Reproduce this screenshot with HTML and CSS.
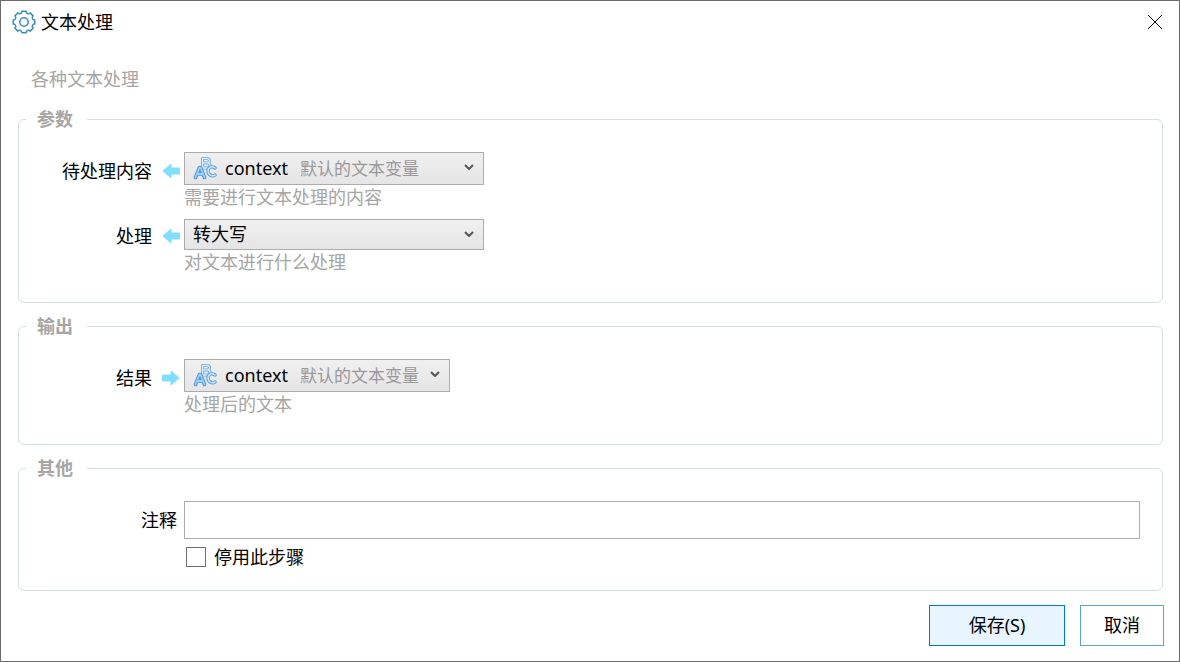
FILE: index.html
```html
<!DOCTYPE html>
<html lang="zh-CN">
<head>
    <meta charset="UTF-8">
    <meta name="viewport" content="width=device-width, initial-scale=1.0">
    <title>文本处理</title>
    <link rel="stylesheet" href="styles.css">
</head>
<body>
    <svg class="symbols" aria-hidden="true">
        <symbol id="abc" viewBox="0 0 24 24">
            <g fill="none" stroke-linejoin="round" stroke-linecap="round">
                <path d="M9.500 12V2.500h4.500a2.200 2.200 0 0 1 .5 4.400a2.500 2.500 0 0 1 0 5.100zM9.500 6.900h5" stroke="#6aaae0" stroke-width="3"/>
                <path d="M9.500 12V2.500h4.500a2.200 2.200 0 0 1 .5 4.400a2.500 2.500 0 0 1 0 5.100zM9.500 6.900h5" stroke="#e0f0fd" stroke-width="1.300"/>
                <path d="M22 12c-3.500-2.500-7-.5-7 3s3.500 6 7 4" stroke="#5b9fdc" stroke-width="3.400"/>
                <path d="M22 12c-3.500-2.500-7-.5-7 3s3.500 6 7 4" stroke="#d0e8fd" stroke-width="1.500"/>
                <path d="M2.500 21.500L6.500 11.500h1L11.500 21.500M4.500 18h5" stroke="#4a93d9" stroke-width="3.600"/>
                <path d="M2.500 21.500L6.500 11.500h1L11.500 21.500M4.500 18h5" stroke="#9fd0fb" stroke-width="1.800"/>
            </g>
        </symbol>
        <symbol id="arrow" viewBox="0 0 18 16">
            <path d="M1 8L9 1v4h8q1 0 1 1v4q0 1-1 1H9v4z" fill="#80dfff" stroke="#80dfff" stroke-linejoin="round"/>
        </symbol>
    </svg>
    <form class="dialog">
        <header class="titlebar">
            <svg class="gear" viewBox="0 0 24 24" aria-hidden="true">
                <path d="M9.900 1.200H14.100A2.300 2.300 0 0 0 18.150 2.900L21.100 5.850A2.300 2.300 0 0 0 22.800 9.900V14.100A2.300 2.300 0 0 0 21.100 18.150L18.150 21.100A2.300 2.300 0 0 0 14.100 22.800H9.900A2.300 2.300 0 0 0 5.850 21.100L2.900 18.150A2.300 2.300 0 0 0 1.200 14.100V9.900A2.300 2.300 0 0 0 2.900 5.850L5.850 2.900A2.300 2.300 0 0 0 9.900 1.200z"/>
                <circle cx="12" cy="12" r="4.200"/>
            </svg>
            <h1>文本处理</h1>
            <button type="button" class="close" aria-label="关闭">
                <svg viewBox="0 0 16 16"><path d="M1 1L15 15M15 1L1 15"/></svg>
            </button>
        </header>
        <p class="description">各种文本处理</p>

        <fieldset>
            <legend>参数</legend>
            <div class="row">
                <label for="content">待处理内容 <svg class="arrow"><use href="#arrow"/></svg></label>
                <div class="picker">
                    <select id="content" class="variable">
                        <option>context</option>
                    </select>
                    <svg class="abc"><use href="#abc"/></svg>
                    <span class="note">默认的文本变量</span>
                    <svg class="chevron" viewBox="0 0 10 6"><path d="M1 1L5 5L9 1"/></svg>
                </div>
                <p class="hint">需要进行文本处理的内容</p>
            </div>
            <div class="row">
                <label for="method">处理 <svg class="arrow"><use href="#arrow"/></svg></label>
                <div class="picker">
                    <select id="method">
                        <option>转大写</option>
                    </select>
                    <svg class="chevron" viewBox="0 0 10 6"><path d="M1 1L5 5L9 1"/></svg>
                </div>
                <p class="hint">对文本进行什么处理</p>
            </div>
        </fieldset>

        <fieldset>
            <legend>输出</legend>
            <div class="row">
                <label for="result">结果 <svg class="arrow out"><use href="#arrow"/></svg></label>
                <div class="picker narrow">
                    <select id="result" class="variable">
                        <option>context</option>
                    </select>
                    <svg class="abc"><use href="#abc"/></svg>
                    <span class="note">默认的文本变量</span>
                    <svg class="chevron" viewBox="0 0 10 6"><path d="M1 1L5 5L9 1"/></svg>
                </div>
                <p class="hint">处理后的文本</p>
            </div>
        </fieldset>

        <fieldset class="other">
            <legend>其他</legend>
            <div class="row">
                <label for="comment" class="plain">注释</label>
                <input type="text" id="comment">
                <div class="check">
                    <input type="checkbox" id="disabled">
                    <label for="disabled">停用此步骤</label>
                </div>
            </div>
        </fieldset>

        <footer>
            <button type="submit" class="save">保存(S)</button>
            <button type="button" class="cancel">取消</button>
        </footer>
    </form>
</body>
</html>
```
FILE: styles.css
```css
* {
    box-sizing: border-box;
}
body {
    margin: 0;
    background: #fff;
    color: #000;
    font-family: "Noto Sans", "Noto Sans CJK SC", sans-serif;
    font-size: 18px;
    line-height: 24px;
}
button, input, select {
    font: inherit;
    color: inherit;
}
p, h1 {
    margin: 0;
}
.symbols {
    display: none;
}
.dialog {
    min-height: 100vh;
    border: 1px solid #6b6b6b;
}

/* title bar */
.titlebar {
    display: flex;
    align-items: center;
    gap: 5px;
    height: 42px;
    padding: 0 16px 0 11px;
}
.titlebar h1 {
    flex: 1;
    font-size: 18px;
    font-weight: 400;
}
.gear {
    width: 24px;
    height: 24px;
    fill: none;
    stroke: #3b8fb8;
    stroke-width: 1.500;
    stroke-linejoin: round;
}
.close {
    display: flex;
    padding: 0;
    border: 0;
    background: none;
}
.close svg {
    width: 16px;
    height: 16px;
    stroke: #000;
}
.description {
    padding: 24px 30px 16px;
    color: #a6a6a6;
}

/* groups */
fieldset {
    min-width: 0;
    margin: 0 16px 11px 17px;
    padding: 21px 22px 28px 0;
    border: 1px solid #d5dfe5;
    border-radius: 6px;
}
legend {
    margin-left: 7px;
    padding: 0 14px 0 11px;
    color: #a6a6a6;
    font-weight: 700;
}
.other {
    padding-bottom: 21px;
}
.row {
    display: grid;
    grid-template-columns: 162px 1fr;
    column-gap: 3px;
}
.row + .row {
    margin-top: 10px;
}
.row > label {
    display: flex;
    align-items: center;
    align-self: end;
    justify-content: flex-end;
    gap: 10px;
    padding-right: 1px;
    line-height: 28px;
}
.row > .plain {
    align-self: center;
    padding-right: 4px;
}
.arrow {
    width: 18px;
    height: 16px;
}
.out {
    transform: scaleX(-1);
}
.hint {
    grid-column: 2;
    color: #a6a6a6;
}

/* drop-downs: icon, note and chevron lie over the select */
.picker {
    position: relative;
    width: 300px;
}
.narrow {
    width: 266px;
}
.picker select {
    display: block;
    width: 100%;
    height: 31px;
    padding: 0 8px 1px;
    border: 1px solid #acacac;
    border-radius: 0;
    background: linear-gradient(#f0f0f0, #e5e5e5);
    appearance: none;
}
.picker .variable {
    height: 33px;
    padding-left: 40px;
}
.picker svg, .note {
    position: absolute;
    pointer-events: none;
}
.abc {
    left: 9px;
    top: 4px;
    width: 24px;
    height: 24px;
}
.note {
    left: 116px;
    top: 5px;
    color: #999;
    font-size: 17px;
}
.chevron {
    right: 10px;
    top: 12px;
    width: 10px;
    height: 6px;
    fill: none;
    stroke: #555;
    stroke-width: 2;
}

#comment {
    width: 100%;
    height: 38px;
    padding: 0 8px;
    border: 1px solid #abadb3;
}
.check {
    display: flex;
    align-items: center;
    grid-column: 2;
    gap: 8px;
    margin-top: 6px;
    padding-left: 2px;
}
.check input {
    width: 20px;
    height: 20px;
    margin: 0;
    border: 1px solid #707070;
    background: #fff;
    appearance: none;
}
.check input:checked {
    background: #0078d7;
}

footer {
    display: flex;
    justify-content: flex-end;
    gap: 15px;
    padding: 3px 15px 15px;
}
footer button {
    width: 84px;
    height: 41px;
    padding: 0 0 1px;
    border: 1px solid #5ba3e0;
    background: #fff;
}
footer .save {
    width: 136px;
    border-color: #0078d7;
    background: #e8f5ff;
}
```
